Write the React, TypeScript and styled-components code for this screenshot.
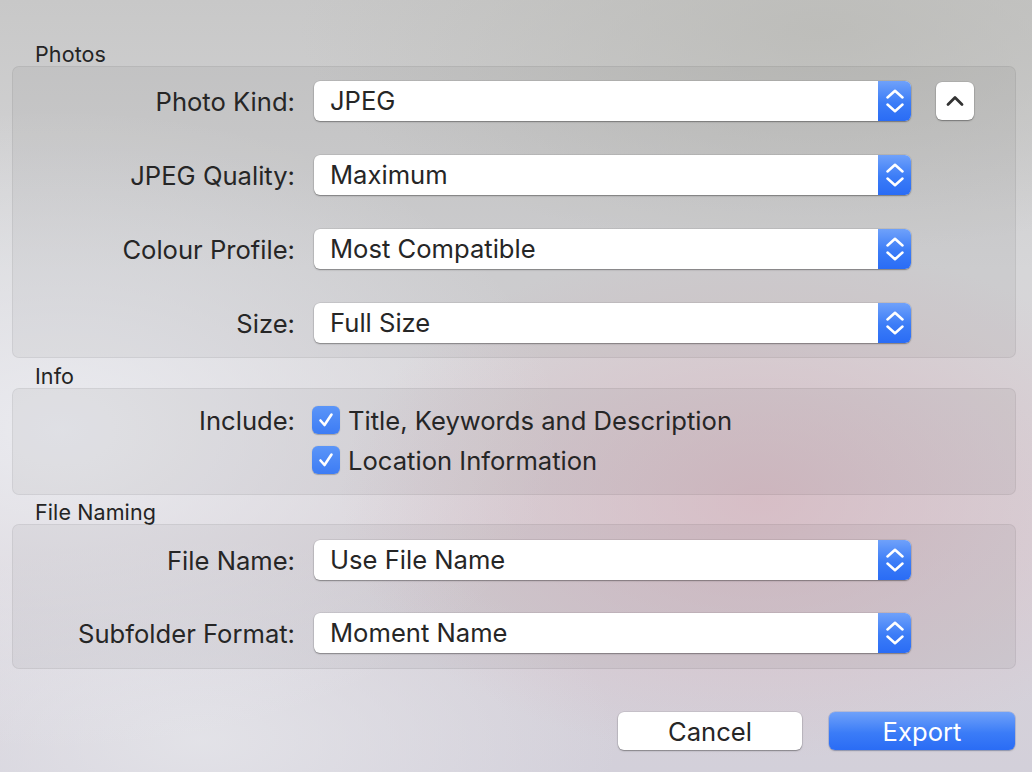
import React from "react";
import styled, { createGlobalStyle } from "styled-components";

const Global = createGlobalStyle`
  html, body { margin: 0; padding: 0; }
  body {
    font-family: "Inter", "Liberation Sans", sans-serif;
    -webkit-font-smoothing: antialiased;
  }
`;

const Window = styled.div`
  width: 1032px;
  height: 772px;
  box-sizing: border-box;
  padding: 42px 16px 0 12px;
  overflow: hidden;
  color: #242424;
  background:
    radial-gradient(ellipse 420px 260px at 760px 500px, rgba(214, 176, 186, 0.6), rgba(214, 176, 186, 0) 100%),
    radial-gradient(ellipse 500px 320px at 60px 430px, rgba(236, 237, 242, 0.9), rgba(236, 237, 242, 0) 100%),
    radial-gradient(ellipse 520px 220px at 820px 30px, rgba(186, 186, 182, 0.8), rgba(186, 186, 182, 0) 100%),
    radial-gradient(ellipse 420px 200px at 200px 740px, rgba(228, 228, 233, 0.9), rgba(228, 228, 233, 0) 100%),
    linear-gradient(180deg, #c8c8c8 0%, #d6d6d8 35%, #d8d2d8 70%, #d3d0da 100%);
`;

const SectionTitle = styled.div<{ $mt?: number }>`
  font-size: 21.5px;
  line-height: 24px;
  height: 24px;
  padding-left: 23px;
  margin-top: ${(p) => p.$mt ?? 0}px;
  letter-spacing: 0.1px;
`;

const Panel = styled.div<{ $pt: number; $pb: number; $gap: number }>`
  display: flex;
  flex-direction: column;
  gap: ${(p) => p.$gap}px;
  padding: ${(p) => p.$pt}px 0 ${(p) => p.$pb}px;
  border: 1px solid rgba(0, 0, 0, 0.06);
  border-radius: 7px;
  background: rgba(0, 0, 0, 0.045);
`;

const Row = styled.div`
  display: grid;
  grid-template-columns: 282px 597px 38px;
  column-gap: 19px;
  align-items: center;
  height: 40px;
`;

const RowExtra = styled.div`
  margin-left: 6px;
`;

const Label = styled.div`
  font-size: 25.6px;
  text-align: right;
  white-space: nowrap;
  color: #262626;
`;

const Popup = styled.div`
  display: flex;
  height: 40px;
  border-radius: 6px;
  background: #fff;
  box-shadow: 0 0 0 0.5px rgba(0, 0, 0, 0.12), 0 1px 1.5px rgba(0, 0, 0, 0.35);
  overflow: hidden;
`;

const PopupText = styled.div`
  flex: 1;
  font-size: 25.6px;
  line-height: 40px;
  padding-left: 16px;
  color: #262626;
`;

const Stepper = styled.div`
  width: 33px;
  display: flex;
  align-items: center;
  justify-content: center;
  background: linear-gradient(180deg, #6fa1fa 0%, #3b7cf7 55%, #2a6cf5 100%);
`;

const SquareButton = styled.div`
  width: 38px;
  height: 38px;
  border-radius: 6px;
  background: #fff;
  display: flex;
  align-items: center;
  justify-content: center;
  box-shadow: 0 0 0 0.5px rgba(0, 0, 0, 0.12), 0 1px 1.5px rgba(0, 0, 0, 0.35);
`;

const CheckRow = styled.div`
  display: grid;
  grid-template-columns: 282px auto;
  column-gap: 17px;
  align-items: center;
  height: 40px;
`;

const CheckItem = styled.div`
  display: flex;
  align-items: center;
  gap: 8px;
  font-size: 25.6px;
  color: #262626;
  white-space: nowrap;
`;

const Box = styled.div`
  width: 28px;
  height: 28px;
  border-radius: 6px;
  background: linear-gradient(180deg, #5b95f8 0%, #3d7cf4 100%);
  display: flex;
  align-items: center;
  justify-content: center;
  box-shadow: 0 0.5px 1px rgba(0, 0, 0, 0.25);
`;

const Footer = styled.div`
  display: flex;
  justify-content: flex-end;
  gap: 27px;
  margin-top: 43px;
  padding-right: 1px;
`;

const Button = styled.div<{ $primary?: boolean }>`
  width: ${(p) => (p.$primary ? "186px" : "184px")};
  height: 38px;
  border-radius: 6px;
  display: flex;
  align-items: center;
  justify-content: center;
  font-size: 25.6px;
  color: ${(p) => (p.$primary ? "#fff" : "#262626")};
  background: ${(p) =>
    p.$primary
      ? "linear-gradient(180deg, #6fa1fa 0%, #3b7cf7 55%, #2a6cf5 100%)"
      : "#fff"};
  box-shadow: ${(p) =>
    p.$primary
      ? "0 0 0 0.5px rgba(30, 80, 200, 0.3), 0 1px 1.5px rgba(0, 0, 0, 0.25)"
      : "0 0 0 0.5px rgba(0, 0, 0, 0.12), 0 1px 1.5px rgba(0, 0, 0, 0.35)"};
`;

const Arrows = () => (
  <svg width="18" height="24" viewBox="0 0 18 24" fill="none">
    <path d="M1.5 8.5 L9 1.8 L16.5 8.5" stroke="#fff" strokeWidth="2.5" strokeLinecap="round" strokeLinejoin="round" />
    <path d="M1.5 15.5 L9 22.2 L16.5 15.5" stroke="#fff" strokeWidth="2.5" strokeLinecap="round" strokeLinejoin="round" />
  </svg>
);

const UpChevron = () => (
  <svg width="20" height="12" viewBox="0 0 20 12" fill="none">
    <path d="M3 9.5 L10 2.5 L17 9.5" stroke="#333" strokeWidth="2.8" strokeLinecap="round" strokeLinejoin="round" />
  </svg>
);

const Check = () => (
  <svg width="18" height="18" viewBox="0 0 18 18" fill="none">
    <path d="M3.5 9.5 L7.5 14 L14.5 3.5" stroke="#fff" strokeWidth="2.6" strokeLinecap="round" strokeLinejoin="round" />
  </svg>
);

const PopupRow = ({ label, value, extra }: { label: string; value: string; extra?: boolean }) => (
  <Row>
    <Label>{label}</Label>
    <Popup>
      <PopupText>{value}</PopupText>
      <Stepper>
        <Arrows />
      </Stepper>
    </Popup>
    {extra ? (
      <RowExtra>
        <SquareButton>
          <UpChevron />
        </SquareButton>
      </RowExtra>
    ) : (
      <span />
    )}
  </Row>
);

export default function App() {
  return (
    <>
      <Global />
      <Window>
        <SectionTitle>Photos</SectionTitle>
        <Panel $pt={14} $pb={14} $gap={34}>
          <PopupRow label="Photo Kind:" value="JPEG" extra />
          <PopupRow label="JPEG Quality:" value="Maximum" />
          <PopupRow label="Colour Profile:" value="Most Compatible" />
          <PopupRow label="Size:" value="Full Size" />
        </Panel>

        <SectionTitle $mt={6}>Info</SectionTitle>
        <Panel $pt={11} $pb={14} $gap={0}>
          <CheckRow>
            <Label>Include:</Label>
            <CheckItem>
              <Box>
                <Check />
              </Box>
              Title, Keywords and Description
            </CheckItem>
          </CheckRow>
          <CheckRow>
            <span />
            <CheckItem>
              <Box>
                <Check />
              </Box>
              Location Information
            </CheckItem>
          </CheckRow>
        </Panel>

        <SectionTitle $mt={5}>File Naming</SectionTitle>
        <Panel $pt={15} $pb={15} $gap={33}>
          <PopupRow label="File Name:" value="Use File Name" />
          <PopupRow label="Subfolder Format:" value="Moment Name" />
        </Panel>

        <Footer>
          <Button>Cancel</Button>
          <Button $primary>Export</Button>
        </Footer>
      </Window>
    </>
  );
}
